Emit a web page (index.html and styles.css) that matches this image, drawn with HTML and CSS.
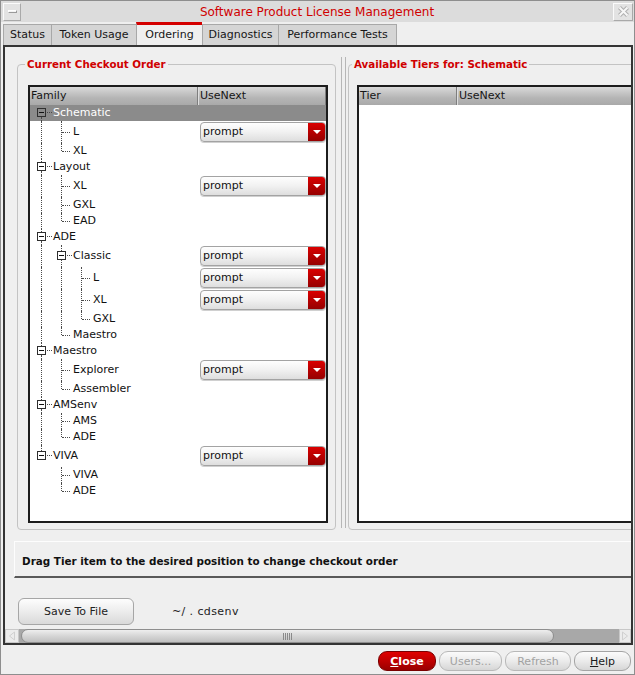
FILE: index.html
```html
<!DOCTYPE html>
<html>
<head>
<meta charset="utf-8">
<title>Software Product License Management</title>
<link rel="stylesheet" href="styles.css">
</head>
<body>
<div class="window">
  <div class="titlebar">
    <div class="tbtn tmin"><span class="bar"></span></div>
    <div class="title">Software Product License Management</div>
    <div class="tbtn tclose">
      <svg width="13" height="13" viewBox="0 0 13 13"><path d="M2.5 2.5L10.5 10.5M10.5 2.5L2.5 10.5" stroke="#b0b0b0" stroke-width="4"/><path d="M2.5 2.5L10.5 10.5M10.5 2.5L2.5 10.5" stroke="#f7f7f7" stroke-width="2"/></svg>
    </div>
  </div>
  <div class="tabs">
    <div class="tab t1">Status</div>
    <div class="tab t2">Token Usage</div>
    <div class="tab t3 on">Ordering</div>
    <div class="tab t4">Diagnostics</div>
    <div class="tab t5">Performance Tests</div>
  </div>
  <div class="frame">
    <div class="viewport">
      <div class="panes">
        <fieldset class="group gl">
          <legend>Current Checkout Order</legend>
          <div class="tree">
            <div class="thead"><div class="hc c1">Family</div><div class="hc c2">UseNext</div></div>
            <div class="rows">
              <div class="row sel"><div class="c1"><span class="g x dn"><i></i></span><span class="lbl">Schematic</span></div><div class="c2"></div></div>
              <div class="row tall"><div class="c1"><span class="g v"></span><span class="g t"></span><span class="lbl">L</span></div><div class="c2"><div class="dd"><span>prompt</span><b></b></div></div></div>
              <div class="row"><div class="c1"><span class="g v"></span><span class="g l"></span><span class="lbl">XL</span></div><div class="c2"></div></div>
              <div class="row"><div class="c1"><span class="g x up dn"><i></i></span><span class="lbl">Layout</span></div><div class="c2"></div></div>
              <div class="row tall"><div class="c1"><span class="g v"></span><span class="g t"></span><span class="lbl">XL</span></div><div class="c2"><div class="dd"><span>prompt</span><b></b></div></div></div>
              <div class="row"><div class="c1"><span class="g v"></span><span class="g t"></span><span class="lbl">GXL</span></div><div class="c2"></div></div>
              <div class="row"><div class="c1"><span class="g v"></span><span class="g l"></span><span class="lbl">EAD</span></div><div class="c2"></div></div>
              <div class="row"><div class="c1"><span class="g x up dn"><i></i></span><span class="lbl">ADE</span></div><div class="c2"></div></div>
              <div class="row tall"><div class="c1"><span class="g v"></span><span class="g x up dn"><i></i></span><span class="lbl">Classic</span></div><div class="c2"><div class="dd"><span>prompt</span><b></b></div></div></div>
              <div class="row tall"><div class="c1"><span class="g v"></span><span class="g v"></span><span class="g t"></span><span class="lbl">L</span></div><div class="c2"><div class="dd"><span>prompt</span><b></b></div></div></div>
              <div class="row tall"><div class="c1"><span class="g v"></span><span class="g v"></span><span class="g t"></span><span class="lbl">XL</span></div><div class="c2"><div class="dd"><span>prompt</span><b></b></div></div></div>
              <div class="row"><div class="c1"><span class="g v"></span><span class="g v"></span><span class="g l"></span><span class="lbl">GXL</span></div><div class="c2"></div></div>
              <div class="row"><div class="c1"><span class="g v"></span><span class="g l"></span><span class="lbl">Maestro</span></div><div class="c2"></div></div>
              <div class="row"><div class="c1"><span class="g x up dn"><i></i></span><span class="lbl">Maestro</span></div><div class="c2"></div></div>
              <div class="row tall"><div class="c1"><span class="g v"></span><span class="g t"></span><span class="lbl">Explorer</span></div><div class="c2"><div class="dd"><span>prompt</span><b></b></div></div></div>
              <div class="row"><div class="c1"><span class="g v"></span><span class="g l"></span><span class="lbl">Assembler</span></div><div class="c2"></div></div>
              <div class="row"><div class="c1"><span class="g x up dn"><i></i></span><span class="lbl">AMSenv</span></div><div class="c2"></div></div>
              <div class="row"><div class="c1"><span class="g v"></span><span class="g t"></span><span class="lbl">AMS</span></div><div class="c2"></div></div>
              <div class="row"><div class="c1"><span class="g v"></span><span class="g l"></span><span class="lbl">ADE</span></div><div class="c2"></div></div>
              <div class="row tall"><div class="c1"><span class="g x up"><i></i></span><span class="lbl">VIVA</span></div><div class="c2"><div class="dd"><span>prompt</span><b></b></div></div></div>
              <div class="row"><div class="c1"><span class="g"></span><span class="g t"></span><span class="lbl">VIVA</span></div><div class="c2"></div></div>
              <div class="row"><div class="c1"><span class="g"></span><span class="g l"></span><span class="lbl">ADE</span></div><div class="c2"></div></div>
            </div>
          </div>
        </fieldset>
        <div class="split"><span class="sl"></span><span class="sl"></span></div>
        <fieldset class="group gr">
          <legend>Available Tiers for: Schematic</legend>
          <div class="tree tree-r">
            <div class="thead"><div class="hc c1">Tier</div><div class="hc c2">UseNext</div></div>
            <div class="rows"></div>
          </div>
        </fieldset>
      </div>
      <div class="hint">Drag Tier item to the desired position to change checkout order</div>
      <div class="saverow">
        <button class="btn save">Save To File</button>
        <span class="path">~/ . cdsenv</span>
      </div>
    </div>
    <div class="hscroll">
      <div class="arr al"><svg width="8" height="10" viewBox="0 0 8 10"><path d="M6.5 1L1.5 5L6.5 9Z" fill="none" stroke="#d0d0d0"/></svg></div>
      <div class="track">
        <div class="thumb"><span class="grip"><i></i><i></i><i></i><i></i><i></i></span></div>
      </div>
      <div class="arr ar"><svg width="8" height="10" viewBox="0 0 8 10"><path d="M1.5 1L6.5 5L1.5 9Z" fill="none" stroke="#d0d0d0"/></svg></div>
    </div>
  </div>
  <div class="bottombar">
    <button class="pb red b1"><u>C</u>lose</button>
    <button class="pb dis b2">Users...</button>
    <button class="pb dis b3">Refresh</button>
    <button class="pb b4"><u>H</u>elp</button>
  </div>
</div>
</body>
</html>
```
FILE: styles.css
```css
* { box-sizing: border-box; }
html, body { margin: 0; padding: 0; }
body {
  width: 635px;
  height: 675px;
  overflow: hidden;
  background: #efefef;
  font-family: "DejaVu Sans", "Noto Sans", sans-serif;
  font-size: 11px;
  color: #111;
}
.window {
  width: 635px;
  height: 675px;
  border: 1px solid #8e8e8e;
  background: #efefef;
  display: flex;
  flex-direction: column;
}

/* title bar */
.titlebar {
  height: 21px;
  flex: none;
  display: flex;
  align-items: center;
  padding: 0 1px 0 2px;
  background: #dcdcdc;
}
.tbtn {
  height: 18px;
  flex: none;
  border: 1px solid;
  border-color: #fbfbfb #a9a9a9 #a9a9a9 #fbfbfb;
  background: #e3e3e3;
  display: flex;
  align-items: center;
  justify-content: center;
}
.tmin { width: 18px; }
.tmin .bar {
  width: 9px;
  height: 3px;
  background: #f4f4f4;
  border: 1px solid;
  border-color: #fff #9a9a9a #9a9a9a #fff;
}
.tclose { width: 20px; }
.title {
  flex: 1;
  text-align: center;
  color: #d00000;
  font-size: 12px;
  line-height: 18px;
}

/* tabs */
.tabs {
  height: 23px;
  flex: none;
  display: flex;
  align-items: flex-end;
  padding-left: 2px;
}
.tab {
  height: 21px;
  border: 1px solid #a8a8a8;
  border-right: none;
  border-bottom: none;
  background: #d5d5d5;
  text-align: center;
  line-height: 20px;
  font-size: 11px;
  color: #161616;
  white-space: nowrap;
}
.tab.on {
  height: 24px;
  margin-bottom: -1px;
  background: #efefef;
  border-top: 3px solid #d40000;
  line-height: 20px;
}
.t1 { width: 48px; }
.t2 { width: 85px; }
.t3 { width: 66px; }
.t4 { width: 76px; }
.t5 { width: 119px; border-right: 1px solid #a8a8a8; }

/* main frame */
.frame {
  height: 600px;
  flex: none;
  margin: 0 0 0 2px;
  width: 630px;
  border: 2px solid #343434;
  display: flex;
  flex-direction: column;
  background: #efefef;
}
.viewport {
  height: 582px;
  flex: none;
  overflow: hidden;
  padding-left: 9px;
}
.panes {
  display: flex;
  margin-top: 11px;
  margin-left: 3px;
  width: 700px;
  height: 472px;
}
.group {
  margin: 0;
  border: 1px solid #c3c3c3;
  border-radius: 4px;
  height: 472px;
  flex: none;
  min-width: 0;
}
.group legend {
  color: #d00000;
  font-weight: bold;
  font-size: 10.3px;
  line-height: 13px;
  padding: 0 2px;
}
.gl {
  width: 319px;
  padding: 14px 7px 6px 10px;
}
.gl legend { margin-left: -3px; }
.gr {
  width: 320px;
  padding: 14px 0 6px 8px;
}
.gr legend { margin-left: -5px; }

.split {
  width: 12px;
  flex: none;
  display: flex;
  padding-left: 5px;
  height: 471px;
  margin-top: -1px;
}
.sl {
  width: 1px;
  height: 100%;
  background: #b6b6b6;
  margin-right: 3px;
}

/* tree */
.tree {
  height: 438px;
  border: 2px solid #1c1c1c;
  background: #fff;
  display: flex;
  flex-direction: column;
}
.tree-r { border-right: none; }
.thead {
  height: 18px;
  flex: none;
  display: flex;
  background: linear-gradient(#d9d9d9, #b5b5b5 60%, #a9a9a9);
  font-size: 11px;
  line-height: 18px;
  color: #161616;
}
.hc.c1 {
  width: 168px;
  padding-left: 1px;
  border-right: 1px solid #7e7e7e;
  box-shadow: 1px 0 0 #dedede;
}
.hc.c2 {
  flex: 1;
  padding-left: 2px;
  border-right: 1px solid #7e7e7e;
}
.tree-r .hc.c1 { width: 98px; }
.rows {
  flex: 1;
  background: #fff;
}
.row {
  height: 16px;
  display: flex;
  font-size: 11px;
}
.row.tall { height: 22px; }
.row.sel { background: #8b8b8b; color: #fff; }
.row .c1 {
  width: 168px;
  height: 100%;
  display: flex;
  padding-left: 1px;
}
.row .c2 {
  flex: 1;
  display: flex;
  align-items: center;
  padding-left: 2px;
}
.lbl {
  align-self: center;
  padding-left: 2px;
  white-space: nowrap;
  line-height: 14px;
}
.g {
  width: 20px;
  height: 100%;
  flex: none;
  position: relative;
}
.v::before, .t::before, .l::before {
  content: "";
  position: absolute;
  left: 10px;
  top: 0;
  bottom: 0;
  border-left: 1px dotted #4a4a4a;
}
.l::before { bottom: 50%; }
.t::after, .l::after {
  content: "";
  position: absolute;
  left: 11px;
  top: 50%;
  width: 8px;
  border-top: 1px dotted #4a4a4a;
}
.x.up::before {
  content: "";
  position: absolute;
  left: 10px;
  top: 0;
  height: calc(50% - 5px);
  border-left: 1px dotted #4a4a4a;
}
.x.dn::after {
  content: "";
  position: absolute;
  left: 10px;
  bottom: 0;
  height: calc(50% - 4px);
  border-left: 1px dotted #4a4a4a;
}
.x i {
  position: absolute;
  left: 6px;
  top: calc(50% - 5px);
  width: 9px;
  height: 9px;
  border: 1px solid #2e2e2e;
  background: #fff;
}
.sel .x i { background: #8b8b8b; border-color: #303030; }
.x i::after {
  content: "";
  position: absolute;
  left: 1px;
  top: 3px;
  width: 5px;
  height: 1px;
  background: #111;
}
.x i::before {
  content: "";
  position: absolute;
  left: 9px;
  top: 3px;
  width: 5px;
  border-top: 1px dotted #4a4a4a;
}

/* dropdown */
.dd {
  width: 126px;
  height: 20px;
  display: flex;
  border: 1px solid #a3a3a3;
  border-radius: 4px;
  overflow: hidden;
  background: linear-gradient(#fefefe, #f1f1f1 50%, #dedede);
  box-shadow: 0 1px 0 #d0d0d0;
}
.dd span {
  flex: 1;
  padding-left: 2px;
  line-height: 18px;
  font-size: 11px;
  color: #111;
}
.dd b {
  width: 17px;
  flex: none;
  background: linear-gradient(#da0000, #b00000 60%, #960000);
  display: flex;
  align-items: center;
  justify-content: center;
}
.dd b::after {
  content: "";
  width: 0;
  height: 0;
  border-left: 4px solid transparent;
  border-right: 4px solid transparent;
  border-top: 4px solid #fff;
}

/* hint */
.hint {
  margin-top: 11px;
  width: 640px;
  height: 37px;
  border-top: 1px solid #fdfdfd;
  border-left: 1px solid #fdfdfd;
  border-bottom: 2px solid #595959;
  padding: 2px 0 0 7px;
  font-weight: bold;
  font-size: 10.4px;
  line-height: 34px;
  color: #111;
  white-space: nowrap;
}

/* save row */
.saverow {
  margin-top: 20px;
  margin-left: 4px;
  display: flex;
  align-items: center;
  gap: 38px;
}
.btn {
  font-family: "DejaVu Sans", sans-serif;
  font-size: 11px;
  color: #222;
  border: 1px solid #a6a6a6;
  border-radius: 6px;
  background: linear-gradient(#fdfdfd, #ececec 50%, #d9d9d9);
  padding: 0;
}
.save { width: 116px; height: 27px; }
.path {
  font-size: 11px;
  letter-spacing: 0.4px;
  color: #222;
}

/* scrollbar */
.hscroll {
  height: 14px;
  flex: none;
  display: flex;
  background: #a8a8a8;
}
.arr {
  width: 14px;
  flex: none;
  background: #ececec;
  border: 1px solid #c8c8c8;
  display: flex;
  align-items: center;
  justify-content: center;
}
.ar { width: 12px; }
.track {
  flex: 1;
  display: flex;
  padding: 0 2px;
}
.thumb {
  width: 533px;
  height: 14px;
  border: 1px solid #8e8e8e;
  border-radius: 7px;
  background: linear-gradient(#eeeeee, #d3d3d3 55%, #c0c0c0);
  display: flex;
  align-items: center;
  justify-content: center;
}
.grip { display: flex; gap: 1px; }
.grip i {
  width: 1px;
  height: 7px;
  background: #8a8a8a;
}

/* bottom bar */
.bottombar {
  flex: 1;
  display: flex;
  justify-content: flex-end;
  align-items: flex-start;
  padding: 6px 3px 0 0;
  gap: 3px;
}
.pb {
  height: 20px;
  border-radius: 9px;
  font-family: "DejaVu Sans", sans-serif;
  font-size: 11px;
  padding: 0;
  border: 1px solid #a4a4a4;
  background: linear-gradient(#fbfbfb, #ebebeb 50%, #d6d6d6);
  color: #1a1a1a;
}
.pb u { text-decoration: underline; }
.pb.red {
  background: linear-gradient(#e00000, #bb0000 55%, #990000);
  border-color: #7a0000;
  color: #fff;
  font-weight: bold;
}
.pb.dis { color: #a2a2a2; border-color: #b8b8b8; }
.b1 { width: 58px; }
.b2 { width: 63px; }
.b3 { width: 66px; }
.b4 { width: 57px; }
```
